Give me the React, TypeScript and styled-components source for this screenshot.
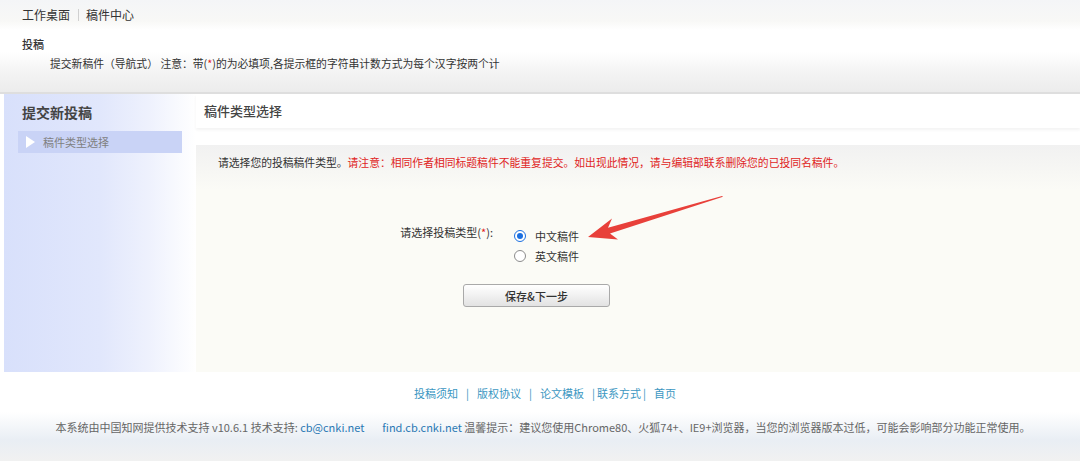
import React, { useState } from 'react';
import styled, { createGlobalStyle } from 'styled-components';

const GlobalStyle = createGlobalStyle`
  html, body {
    margin: 0;
    padding: 0;
    background: #ffffff;
  }
  body {
    font-family: "Noto Sans CJK SC", "Noto Sans", sans-serif;
    color: #333;
  }
`;

const Page = styled.div`
  position: relative;
  width: 1080px;
  height: 461px;
  overflow: hidden;
  display: flex;
  flex-direction: column;
`;

// top breadcrumb
const TopBar = styled.div`
  height: 30px;
  display: flex;
  align-items: center;
  padding-left: 22px;
  background: linear-gradient(180deg, #f4f5f7 0%, #f8f8f6 70%, #ffffff 100%);
`;

const Crumb = styled.span`
  font-size: 12px;
  line-height: 14px;
  color: #333;
`;

const CrumbSep = styled.span`
  display: inline-block;
  width: 1px;
  height: 12px;
  background: #d0d0d0;
  margin: 0 7px 0 8px;
`;

const Notice = styled.div`
  height: 62px;
  padding: 7px 0 0 22px;
  box-sizing: border-box;
  background: linear-gradient(180deg, #ffffff 0%, #ffffff 35%, #f3f3f3 70%, #ececec 100%);
`;

const NoticeTitle = styled.div`
  font-size: 11px;
  line-height: 14px;
  font-weight: 500;
  color: #333;
`;

const NoticeText = styled.div`
  margin: 5px 0 0 28px;
  font-size: 10.8px;
  line-height: 14px;
  color: #333;
`;

const Star = styled.span`
  color: #e02020;
`;

const Divider = styled.div`
  height: 2px;
  background: #dedede;
`;

const Main = styled.div`
  height: 278px;
  display: flex;
  padding-left: 4px;
  background: #ffffff;
`;

const Sidebar = styled.div`
  width: 192px;
  padding-top: 8px;
  box-sizing: border-box;
  background: linear-gradient(90deg, #d8e0fb 0%, #e1e7fc 50%, #eef1fd 75%, #ffffff 100%);
`;

const SideTitle = styled.div`
  padding-left: 18px;
  font-size: 14px;
  line-height: 20px;
  font-weight: 700;
  color: #444;
`;

const SideItem = styled.div<{ $active?: boolean }>`
  margin: 9px 0 0 14px;
  width: 164px;
  height: 22px;
  display: flex;
  align-items: center;
  gap: 8px;
  padding-left: 8px;
  box-sizing: border-box;
  background: ${p => (p.$active ? '#c9d3f6' : 'transparent')};
  font-size: 11px;
  color: #808080;
`;

const Triangle = styled.span`
  width: 0;
  height: 0;
  border-top: 6px solid transparent;
  border-bottom: 6px solid transparent;
  border-left: 9px solid #ffffff;
`;

const Content = styled.div`
  flex: 1;
  display: flex;
  flex-direction: column;
`;

const ContentHeader = styled.div`
  height: 34px;
  line-height: 34px;
  padding-left: 8px;
  font-size: 13px;
  font-weight: 500;
  color: #444;
  background: #ffffff;
  box-shadow: 0 2px 3px rgba(0, 0, 0, 0.05);
`;

const Panel = styled.div`
  flex: 1;
  margin-top: 17px;
  padding: 10px 0 0 22px;
  background: linear-gradient(180deg, #f1f1f1 0px, #f7f7f4 28px, #fbfbf6 45px, #fbfbf6 100%);
`;

const NoteLine = styled.div`
  font-size: 10.8px;
  line-height: 14px;
  color: #333;
`;

const Warn = styled.span`
  color: #e02424;
`;

const FormRow = styled.div`
  margin: 57px 0 0 135px;
  display: flex;
  gap: 21px;
`;

const FieldLabel = styled.div`
  width: 140px;
  text-align: right;
  font-size: 11px;
  line-height: 12px;
  color: #333;
`;

const RadioGroup = styled.div`
  display: flex;
  flex-direction: column;
`;

const RadioOption = styled.label`
  display: flex;
  align-items: center;
  gap: 9px;
  height: 20px;
  font-size: 11px;
  color: #333;
  cursor: pointer;
`;

const RadioDot = styled.span<{ $checked: boolean }>`
  width: 12px;
  height: 12px;
  box-sizing: border-box;
  border-radius: 50%;
  border: 1px solid ${p => (p.$checked ? '#1a6fe0' : '#8c8c8c')};
  background: #fff;
  display: flex;
  align-items: center;
  justify-content: center;

  &::after {
    content: '';
    width: 6px;
    height: 6px;
    border-radius: 50%;
    background: ${p => (p.$checked ? '#1a6fe0' : 'transparent')};
  }
`;

const SaveButton = styled.button`
  margin: 18px 0 0 245px;
  width: 147px;
  height: 23px;
  border: 1px solid #a9a9a9;
  border-radius: 3px;
  background: linear-gradient(180deg, #ffffff 0%, #f1f1f1 50%, #e2e2e2 100%);
  font-family: inherit;
  font-size: 11px;
  font-weight: 500;
  color: #333;
  padding: 0;
  cursor: pointer;
`;

const ArrowMark = styled.svg`
  position: absolute;
  left: 580px;
  top: 190px;
  width: 150px;
  height: 60px;
  pointer-events: none;
`;

const Footer = styled.div`
  flex: 1;
  padding-top: 14px;
  background: linear-gradient(180deg, #ffffff 0px, #ffffff 40px, #e9eef4 68px, #f1f1f1 89px);
`;

const FooterNav = styled.div`
  padding-left: 10px;
  display: flex;
  justify-content: center;
  font-size: 11px;
  line-height: 14px;
  color: #3c97c2;
`;

const NavLink = styled.a`
  color: #3c97c2;
  text-decoration: none;
`;

const NavSep = styled.span<{ $l?: number; $r?: number }>`
  margin-left: ${p => p.$l ?? 8}px;
  margin-right: ${p => p.$r ?? 8}px;
`;

const FooterInfo = styled.div`
  margin-top: 20px;
  padding-left: 6px;
  text-align: center;
  font-size: 11px;
  line-height: 14px;
  color: #666;
  white-space: nowrap;
`;

const InfoLink = styled.a<{ $gap?: boolean }>`
  color: #2a78b4;
  text-decoration: none;
  margin-right: ${p => (p.$gap ? '18px' : '0')};
`;

const App = () => {
  const [lang, setLang] = useState<'zh' | 'en'>('zh');

  return (
    <Page>
      <GlobalStyle />
      <TopBar>
        <Crumb>工作桌面</Crumb>
        <CrumbSep />
        <Crumb>稿件中心</Crumb>
      </TopBar>

      <Notice>
        <NoticeTitle>投稿</NoticeTitle>
        <NoticeText>
          提交新稿件（导航式） 注意：带(<Star>*</Star>)的为必填项,各提示框的字符串计数方式为每个汉字按两个计
        </NoticeText>
      </Notice>
      <Divider />

      <Main>
        <Sidebar>
          <SideTitle>提交新投稿</SideTitle>
          <SideItem $active>
            <Triangle />
            稿件类型选择
          </SideItem>
        </Sidebar>

        <Content>
          <ContentHeader>稿件类型选择</ContentHeader>
          <Panel>
            <NoteLine>
              请选择您的投稿稿件类型。
              <Warn>请注意：相同作者相同标题稿件不能重复提交。如出现此情况，请与编辑部联系删除您的已投同名稿件。</Warn>
            </NoteLine>

            <FormRow>
              <FieldLabel>
                请选择投稿类型(<Star>*</Star>):
              </FieldLabel>
              <RadioGroup>
                <RadioOption onClick={() => setLang('zh')}>
                  <RadioDot $checked={lang === 'zh'} />
                  中文稿件
                </RadioOption>
                <RadioOption onClick={() => setLang('en')}>
                  <RadioDot $checked={lang === 'en'} />
                  英文稿件
                </RadioOption>
              </RadioGroup>
            </FormRow>

            <SaveButton>保存&amp;下一步</SaveButton>
          </Panel>
        </Content>
      </Main>

      {/* red annotation arrow */}
      <ArrowMark viewBox="0 0 150 60">
        <polygon
          points="8,47 38,49.5 30,43.6 143,6.8 142,6 28,37.8 32,28.5"
          fill="#e8403a"
        />
      </ArrowMark>

      <Footer>
        <FooterNav>
          <NavLink>投稿须知</NavLink>
          <NavSep>|</NavSep>
          <NavLink>版权协议</NavLink>
          <NavSep>|</NavSep>
          <NavLink>论文模板</NavLink>
          <NavSep $r={2}>|</NavSep>
          <NavLink>联系方式</NavLink>
          <NavSep $l={2}>|</NavSep>
          <NavLink>首页</NavLink>
        </FooterNav>
        <FooterInfo>
          本系统由中国知网提供技术支持 v10.6.1 技术支持: <InfoLink $gap>cb@cnki.net</InfoLink>
          <InfoLink>find.cb.cnki.net</InfoLink> 温馨提示：建议您使用Chrome80、火狐74+、IE9+浏览器，当您的浏览器版本过低，可能会影响部分功能正常使用。
        </FooterInfo>
      </Footer>
    </Page>
  );
};

export default App;
